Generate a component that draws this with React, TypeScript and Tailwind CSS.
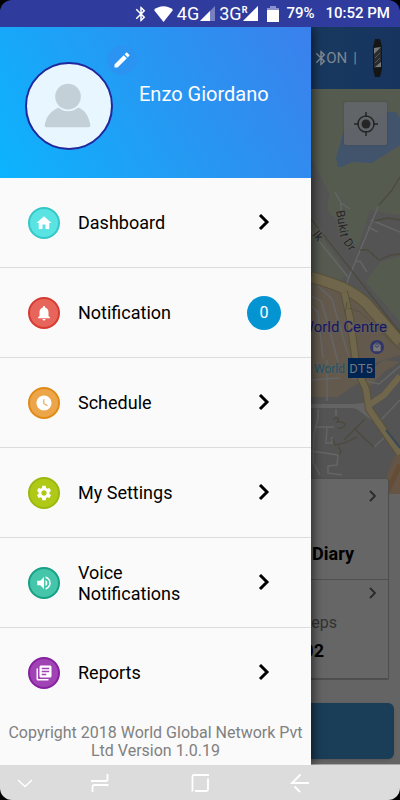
import type { ReactNode } from 'react';
import {
  MdBluetooth,
  MdEdit,
  MdHome,
  MdLibraryBooks,
  MdLocalMall,
  MdNotifications,
  MdSettings,
  MdVolumeUp,
  MdWatchLater,
} from 'react-icons/md';

type Item = { label: string; icon: ReactNode; tone: string; badge?: string };

const items: Item[] = [
  { label: 'Dashboard', icon: <MdHome />, tone: 'bg-[#59e3e3] border-[#35c6c6]' },
  { label: 'Notification', icon: <MdNotifications />, tone: 'bg-[#e8655b] border-[#d63a30]', badge: '0' },
  { label: 'Schedule', icon: <MdWatchLater />, tone: 'bg-[#eda54a] border-[#df8a17]' },
  { label: 'My Settings', icon: <MdSettings />, tone: 'bg-[#b0c917] border-[#9bb810]' },
  { label: 'Voice Notifications', icon: <MdVolumeUp />, tone: 'bg-[#45c5a9] border-[#16a085]' },
  { label: 'Reports', icon: <MdLibraryBooks />, tone: 'bg-[#a043b4] border-[#8620a0]' },
];

function Signal({ level }: { level: number }) {
  return (
    <svg width="15" height="15" viewBox="0 0 15 15" aria-hidden="true">
      <path d="M15 0V15H0Z" fill="#fff" opacity=".35" />
      <path d={`M${level} ${15 - level}V15H0Z`} fill="#fff" />
    </svg>
  );
}

function StatusBar() {
  return (
    <div className="flex h-[27px] shrink-0 items-center justify-end bg-[#303c9d] pr-[10px] text-white">
      <MdBluetooth className="mr-1 size-[18px]" />
      <svg className="mr-1" width="19" height="16" viewBox="0 0 19 16" aria-hidden="true">
        <path d="M0 4C5-1 14-1 19 4L9.500 16Z" fill="#fff" />
      </svg>
      <span className="mr-px text-[18px] leading-6">4G</span>
      <Signal level={10} />
      <span className="ml-1 text-[18px] leading-6">3G</span>
      <span className="mb-2 text-[9px] leading-3 font-bold">R</span>
      <span className="-ml-1">
        <Signal level={15} />
      </span>
      <svg className="mr-[7px] ml-[9px]" width="12" height="16" viewBox="0 0 12 16" aria-hidden="true">
        <path d="M3 0H9V2H12V5H0V2H3Z" fill="#8b92cb" />
        <path d="M0 4H12V16H0Z" fill="#fff" />
      </svg>
      <span className="mr-[11px] text-[15px] font-medium">79%</span>
      <span className="text-[15px] font-medium">10:52 PM</span>
    </div>
  );
}

function Chevron() {
  return (
    <svg width="12" height="18" viewBox="0 0 12 18" fill="none" aria-hidden="true">
      <path d="M2 1L9 8L2 15" stroke="#000" strokeWidth="3" />
    </svg>
  );
}

function Drawer() {
  return (
    <aside className="z-10 flex w-[311px] shrink-0 flex-col bg-[#fafafa] shadow-[2px_0_10px_rgba(0,0,0,0.6)]">
      <header className="flex h-[151px] bg-linear-[60deg,#0cb4fe_0%,#2599f3_50%,#3b80ec_100%] pl-[25px]">
        <div className="mt-[35px] size-[88px] shrink-0 overflow-hidden rounded-full border-2 border-[#20289b] bg-[#e8f6ff]">
          <svg viewBox="0 0 85 85" role="img" aria-label="Profile photo">
            <path d="M18 63V61C20 52 25 47 32 44C37 49 46 49 52 44C59 47 62 52 64 61V63Q64 64 62 64H20Q18 64 18 63Z" fill="#c3d0d7" />
            <circle cx="41.500" cy="33" r="14.500" fill="#e8f6ff" />
            <circle cx="41.500" cy="33" r="13" fill="#c3d0d7" />
          </svg>
        </div>
        <button
          aria-label="Edit profile"
          className="mt-[18px] -ml-[6px] flex size-[30px] shrink-0 items-center justify-center rounded-full bg-[#2b93f1] text-white"
        >
          <MdEdit className="size-5" />
        </button>
        <h1 className="mt-[54px] ml-[2px] text-[20px] leading-[27px] whitespace-nowrap text-white">Enzo Giordano</h1>
      </header>
      <nav aria-label="Main">
        <ul>
          {items.map((item) => (
            <li key={item.label} className="border-b border-[#dcdcdc] last:border-b-0">
              <a href="#" className="flex h-[89px] items-center pr-[30px] pl-7">
                <span className={`flex size-8 items-center justify-center rounded-full border-2 text-[18px] text-white ${item.tone}`}>
                  {item.icon}
                </span>
                <span className="ml-[18px] max-w-[130px] text-[18px] leading-[21px] text-black">{item.label}</span>
                <span className="ml-auto flex w-[34px] justify-center">
                  {item.badge ? (
                    <span className="flex size-[34px] items-center justify-center rounded-full bg-[#0594d2] text-[16px] text-white">
                      {item.badge}
                    </span>
                  ) : (
                    <Chevron />
                  )}
                </span>
              </a>
            </li>
          ))}
        </ul>
      </nav>
      <p className="mt-auto px-2 pb-[5px] text-center text-[16px] leading-[18px] text-[#808080]">
        Copyright 2018 World Global Network Pvt Ltd Version 1.0.19
      </p>
    </aside>
  );
}

function MapView() {
  return (
    <div className="relative h-[405px] shrink-0 overflow-hidden bg-[#545454]">
      <svg className="h-full w-full" viewBox="311 89 89 405" preserveAspectRatio="xMinYMin slice" fill="none" role="img" aria-label="Map">
        <path d="M311 89H400V215L375 222L368 235L358 252L343 228L322 230L330 195L311 158Z" fill="#565b50" />
        <path d="M311 222L350 272L400 345V325L378 300L366 284L379 260L400 254V215L370 210L358 248L311 190Z" fill="#545454" />
        <path d="M400 256L380 262L366 282L400 322Z" fill="#565b50" />
        <path d="M311 220V272L340 280L348 275Z" fill="#565a51" />
        <path d="M344 130L336 158L338 167L342 167L352 162L372 163L400 145V118L396 112L387 112L378 118Z" fill="#41546c" />
        <path d="M311 275L341 285L366 302L400 342V355L377 362L360 382L337 397L311 397Z" fill="#635a4d" />
        <path d="M400 362L384 372L368 388L360 378L384 360Z" fill="#635a4d" />
        <path d="M380 494L393 460L400 448V494Z" fill="#665544" />
        <g stroke="#656565" strokeWidth="1.500">
          <path d="M335 192L341 203L350 209M341 203V213M311 231L348 277M378 207L349 277L345 288L338 286M371 220L400 232M368 227L378 232M355 262L360 261L367 272" />
          <path d="M318 286L332 299L348 355M311 296L321 301L327 320L338 362M311 306L318 312L323 358M345 288L352 350M327 360V401M311 380L340 378M400 366L379 384L352 378M318 409V418L314 434L313 462L320 475M314 427H334M311 451L338 455L337 465L328 466V473L342 475M327 427L326 443H332V437M336 409V416M400 400L379 422M374 447L384 438M358 370L374 377" />
        </g>
        <path d="M311 404H355L370 402V412L352 408H311Z" fill="#646464" />
        <path d="M356 406L380 424" stroke="#646464" strokeWidth="4" />
        <g stroke="#4c493d" strokeWidth="1.300">
          <path d="M400 177L392 190L379 205M374 221L388 218L400 220M360 250H368L379 260L391 255L400 254M311 219L348 266L400 332" />
          <path d="M333 420C337 415 341 420 336 422C350 421 346 429 338 428M333 439L335 445L345 443L357 437M365 419L344 440M355 429L366 440L374 447M338 447L341 451L339 455" />
        </g>
        <g strokeLinejoin="round">
          <path d="M311 277C340 285 352 291 366 303L400 342" stroke="#585239" strokeWidth="12" />
          <path d="M311 277C340 285 352 291 366 303L400 342" stroke="#70664b" strokeWidth="10" />
          <path d="M344 292L350 318L357 370L366 389L369 409L400 454" stroke="#585239" strokeWidth="8" />
          <path d="M344 292L350 318L357 370L366 389L369 409L400 454M400 376L384 395L369 405" stroke="#70664b" strokeWidth="6" />
          <path d="M347 302L345 315M348 308L360 312L400 350" stroke="#585239" />
          <path d="M386 494L400 465" stroke="#654c34" strokeWidth="5" />
        </g>
        <path d="M386 430L400 448" stroke="#35495b" strokeWidth="2" />
        <g fontFamily="Roboto, sans-serif">
          <g fontSize="12" fill="#262626" stroke="#5a5c57" strokeWidth="2" paintOrder="stroke">
            <text transform="translate(336 211) rotate(80)">Bukit</text>
            <text transform="translate(343 242) rotate(55)">Dr</text>
            <text transform="translate(312 235) rotate(50)">lk</text>
          </g>
          <text x="387" y="332" textAnchor="end" fontSize="15" fill="#161662" stroke="#625d59" strokeWidth="2" paintOrder="stroke">
            World Centre
          </text>
          <text x="345" y="373" textAnchor="end" fontSize="12" fill="#245366" stroke="#625d54" strokeWidth="2" paintOrder="stroke">
            World
          </text>
          <rect x="348" y="358" width="27" height="20" fill="#002451" />
          <text x="361" y="373" textAnchor="middle" fontSize="13" fill="#74777d">DT5</text>
        </g>
        <circle cx="377" cy="347" r="7" fill="#30356a" />
        <MdLocalMall x="372" y="342" size={10} color="#777" />
      </svg>
      <button
        aria-label="My location"
        className="absolute top-[13px] right-[13px] flex size-[43px] items-center justify-center rounded-xs bg-[#64666a]/90 shadow-[0_0_2px_#444]"
      >
        <svg width="24" height="24" viewBox="0 0 24 24" fill="none" stroke="#252525" strokeWidth="1.500" aria-hidden="true">
          <circle cx="12" cy="12" r="8" />
          <circle cx="12" cy="12" r="4.500" fill="#252525" stroke="none" />
          <path d="M12 0V5M12 19V24M0 12H5M19 12H24" />
        </svg>
      </button>
    </div>
  );
}

function SmallChevron() {
  return (
    <svg className="mr-[11px]" width="8" height="12" viewBox="0 0 8 12" fill="none" aria-hidden="true">
      <path d="M1 1L6 6L1 11" stroke="#2a2a2a" strokeWidth="1.800" />
    </svg>
  );
}

function Page() {
  return (
    <main className="flex min-w-0 flex-1 flex-col overflow-hidden border-b border-[#a8a8a8] bg-[#646464]">
      <header className="flex h-[62px] shrink-0 items-center justify-end bg-linear-to-r from-[#18395f] to-[#17345f] text-[#7d8691]">
        <MdBluetooth className="size-[18px] shrink-0" />
        <span className="mr-4 -ml-1 flex gap-[6px] text-[15px]">
          <span>ON</span>
          <span>|</span>
        </span>
        <svg className="mr-[18px] shrink-0" width="9" height="38" viewBox="0 0 9 38" role="img" aria-label="Fitness band">
          <path d="M2 0H7L9 8V30L7 38H2L0 30V8Z" fill="#151515" />
          <path d="M1 9L8 8V28L1 29Z" fill="#292b2d" />
          <path d="M1 9L8 8L1 15ZM8 23V28H2Z" fill="#777" />
          <path d="M2 19L7 14M2 24L7 19" stroke="#555" />
        </svg>
      </header>
      <MapView />
      <section className="relative -mt-[15px] mr-[11px] flex h-[201px] shrink-0 flex-col rounded-r-xs border-r border-b-2 border-[#4e4e4e] bg-[#666] shadow-[0_-1px_1px_#505050]">
        <div className="flex h-[101px] flex-col items-end border-b border-[#505050] pt-[11px]">
          <SmallChevron />
          <strong className="mt-[38px] mr-[34px] text-[18px] leading-7 text-black">Diary</strong>
        </div>
        <div className="flex flex-1 flex-col items-end pt-[7px]">
          <SmallChevron />
          <span className="mt-[12px] mr-[51px] text-[16px] leading-6 text-[#333]">Steps</span>
          <strong className="mt-1 mr-[64px] text-[18px] leading-6 text-black">02</strong>
        </div>
      </section>
      <button aria-label="Start" className="mt-[23px] mr-[6px] h-[56px] shrink-0 rounded-r-md bg-[#1a3e58] shadow-sm" />
    </main>
  );
}

function NavBar() {
  return (
    <nav aria-label="System" className="grid h-[35px] shrink-0 grid-cols-[1fr_2fr_2fr_2fr_1fr] items-center bg-[#dcdcdc]">
      <button aria-label="Hide bar" className="flex justify-center">
        <svg width="20" height="20" viewBox="0 0 20 20" fill="none" stroke="#fff" strokeWidth="1.500">
          <path d="M3 7L10 13.500L17 7" />
        </svg>
      </button>
      <button aria-label="Recent apps" className="flex justify-center">
        <svg width="20" height="20" viewBox="0 0 20 20" fill="none" stroke="#fff" strokeWidth="1.800">
          <path d="M1 8H15.500Q17.500 8 17.500 6V1M18.500 12H4.500Q2.500 12 2.500 14V19" />
        </svg>
      </button>
      <button aria-label="Home" className="flex justify-center">
        <svg width="20" height="20" viewBox="0 0 20 20" fill="none" stroke="#fff" strokeWidth="1.800">
          <path d="M2.500 18.500V3.500Q2.500 2 4 2H19M18 5.500V16.500Q18 18 16.500 18H5" />
        </svg>
      </button>
      <button aria-label="Back" className="flex justify-center">
        <svg width="20" height="20" viewBox="0 0 20 20" fill="none" stroke="#fff" strokeWidth="1.800">
          <path d="M19 10H2L10.500 1.500M4.500 13.500L10 19" />
        </svg>
      </button>
    </nav>
  );
}

export default function App() {
  return (
    <div className="min-h-screen bg-black font-['Roboto',sans-serif]">
      <div className="flex min-h-screen flex-col overflow-hidden rounded-xl">
        <StatusBar />
        <div className="flex flex-1 overflow-hidden">
          <Drawer />
          <Page />
        </div>
        <NavBar />
      </div>
    </div>
  );
}
